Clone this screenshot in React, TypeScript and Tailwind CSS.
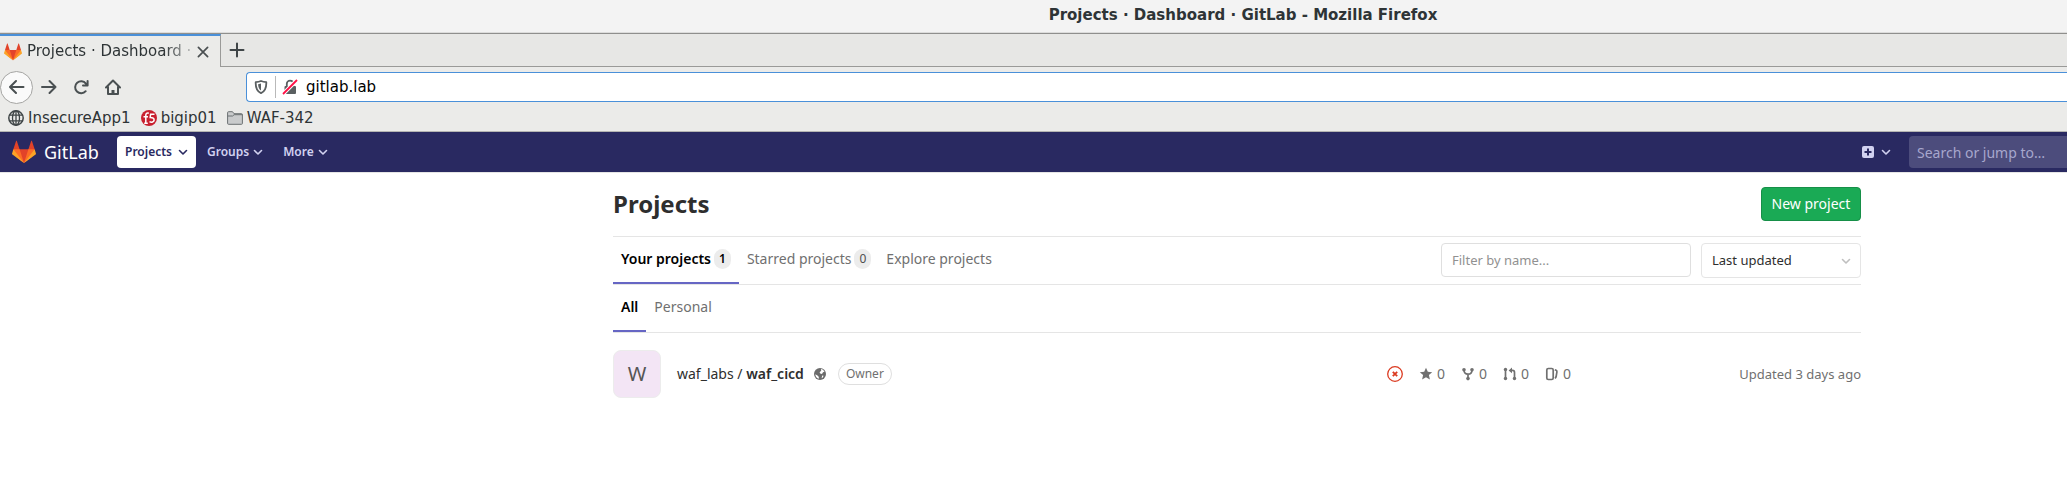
import type { ReactNode } from 'react';

function Tanuki({ className }: { className: string }) {
  return (
    <svg className={className} viewBox="0 0 36 36" aria-hidden="true">
      <path fill="#e24329" d="M2 14l9.38 9v-9l-4-12.28c-.205-.632-1.176-.632-1.38 0z" />
      <path fill="#e24329" d="M34 14l-9.38 9v-9l4-12.28c.205-.632 1.176-.632 1.38 0z" />
      <path fill="#e24329" d="M18 34.38L3 14h30z" />
      <path fill="#fc6d26" d="M18 34.38L11.38 14H2l4 11z" />
      <path fill="#fc6d26" d="M18 34.38L24.62 14H34l-4 11z" />
      <path fill="#fca326" d="M2 14L.1 20.16c-.18.565 0 1.2.5 1.56l17.42 12.66z" />
      <path fill="#fca326" d="M34 14l1.9 6.16c.18.565 0 1.2-.5 1.56L18 34.38z" />
    </svg>
  );
}

function Chevron({ className }: { className: string }) {
  return (
    <svg className={className} viewBox="0 0 10 10" fill="none" stroke="currentColor" strokeWidth="1.6" strokeLinecap="round" strokeLinejoin="round" aria-hidden="true">
      <path d="M1.5 3.5L5 7l3.5-3.5" />
    </svg>
  );
}

function Stroke({ children, className }: { children: ReactNode; className: string }) {
  return (
    <svg className={className} viewBox="0 0 16 16" fill="none" stroke="currentColor" strokeWidth="2" strokeLinecap="round" strokeLinejoin="round" aria-hidden="true">
      {children}
    </svg>
  );
}

function BrowserChrome() {
  return (
    <div className="bg-[#ebebe9] font-['DejaVu_Sans',sans-serif] text-[#2e3436]">
      <div className="flex h-[34px] items-center justify-center border-b border-[#8f8f8d] bg-[#f3f3f3] pb-0.5 pl-[419px] text-[15px] font-bold shadow-[inset_0_-1px_0_#dcdcdb]">
        Projects · Dashboard · GitLab - Mozilla Firefox
      </div>

      <div className="flex h-[33px]">
        <div className="flex w-[221px] items-center border-t-2 border-r border-t-[#4a90d9] border-r-[#9a9a98] pl-1">
          <Tanuki className="size-[18px] shrink-0" />
          <span className="ml-[5px] w-[167px] text-[15px] whitespace-nowrap [mask-image:linear-gradient(to_right,black_82%,transparent_104%)]">
            Projects · Dashboard ·
          </span>
          <button type="button" aria-label="Close tab" className="ml-[3px] text-[#4a4f51]">
            <svg className="size-3" viewBox="0 0 12 12" fill="none" stroke="currentColor" strokeWidth="1.7" strokeLinecap="round">
              <path d="M1.4 1.4l9.2 9.2M10.6 1.4l-9.2 9.2" />
            </svg>
          </button>
        </div>
        <div className="flex flex-1 items-center border-b border-[#9a9a98] bg-[#e7e7e5] pl-2">
          <button type="button" aria-label="New tab" className="text-[#3f4547]">
            <Stroke className="size-4"><path d="M8 1.5v13M1.5 8h13" /></Stroke>
          </button>
        </div>
      </div>

      <div className="flex h-10 items-center text-[#4a5052]">
        <button type="button" aria-label="Back" className="flex size-[33px] items-center justify-center rounded-full border border-[#a5a5a3] bg-[#fafafa]">
          <Stroke className="size-4"><path d="M14.5 8H1M7 2L1 8l6 6" /></Stroke>
        </button>
        <button type="button" aria-label="Forward" className="ml-2">
          <Stroke className="size-4"><path d="M1 8h13.5M8.5 2l6 6-6 6" /></Stroke>
        </button>
        <button type="button" aria-label="Reload" className="ml-4">
          <Stroke className="size-4"><path d="M12.7 12.2A6 6 0 1 1 12.9 4.6L14.3 6.4M14.6 2v4.6H10" /></Stroke>
        </button>
        <button type="button" aria-label="Home" className="ml-4">
          <Stroke className="size-4">
            <path d="M1 8.5l7-7 7 7M3 8v7h10V8" />
            <path d="M8 15v-4" strokeWidth="3" strokeLinecap="butt" />
          </Stroke>
        </button>
        <div className="ml-[125px] flex h-[30px] flex-1 items-center rounded-l border border-r-0 border-[#4a90d9] bg-white">
          <svg className="ml-[7px] size-3.5 text-[#5a5f61]" viewBox="0 0 14 14" aria-hidden="true">
            <path d="M7 1c2 .9 3.800 1.100 5.300 1.200C12.500 8 11 11.500 7 13.200 3 11.500 1.500 8 1.700 2.200 3.200 2.100 5 1.900 7 1z" fill="none" stroke="currentColor" strokeWidth="1.8" strokeLinejoin="round" />
            <path d="M7 3.600v7C5 9.300 4.200 7.200 4.100 4.200z" fill="currentColor" />
          </svg>
          <span className="ml-[7px] h-[22px] w-px bg-[#b9b9b9]" />
          <svg className="ml-1.5 size-4" viewBox="0 0 16 16" aria-hidden="true">
            <path d="M4.800 7V4.800a3.200 3.200 0 0 1 6.400 0V7" fill="none" stroke="#5a5f61" strokeWidth="1.800" />
            <rect x="2.500" y="7" width="11.500" height="8" rx="1" fill="#5a5f61" />
            <path d="M1 15L15 1" stroke="white" strokeWidth="4" />
            <path d="M1 15L15 1" stroke="#ff0f45" strokeWidth="1.800" />
          </svg>
          <input aria-label="Address" defaultValue="gitlab.lab" className="ml-2 min-w-0 flex-1 bg-transparent text-[15px] text-black outline-none" />
        </div>
      </div>

      <nav aria-label="Bookmarks" className="flex h-[25px] items-center border-b border-[#b4b4b2] pb-0.5 pl-2 text-[15px]">
        <a href="#insecureapp1" className="flex items-center gap-1">
          <svg className="size-4 text-[#3f4547]" viewBox="0 0 16 16" fill="none" stroke="currentColor" strokeWidth="1.3" aria-hidden="true">
            <circle cx="8" cy="8" r="7.200" strokeWidth="1.500" />
            <ellipse cx="8" cy="8" rx="3.500" ry="7.200" />
            <path d="M8 1v14M1.500 5.200h13M1.500 10.800h13" />
          </svg>
          InsecureApp1
        </a>
        <a href="#bigip01" className="ml-2.5 flex items-center gap-1">
          <svg className="size-4" viewBox="0 0 16 16" aria-hidden="true">
            <circle cx="8" cy="8" r="8" fill="#c8202f" />
            <path d="M7.800 3.200C5.500 2.500 4.800 4 4.800 5.500V13M2.500 6.800h4.500M3.200 13.200h3.600" stroke="white" strokeWidth="1.500" fill="none" />
            <path d="M13.500 4.200H9.600l-.4 3.300c2.600 0 4 .9 3.900 2.600-.1 1.900-2.600 2.700-4.600 1.600" stroke="white" strokeWidth="1.500" fill="none" />
          </svg>
          bigip01
        </a>
        <a href="#waf-342" className="ml-2.5 flex items-center gap-1">
          <svg className="size-4" viewBox="0 0 16 16" aria-hidden="true">
            <path d="M.6 13.400V2.600q0-.9.900-.9h4l1.500 2h7.500q.9 0 .9.900v8.800q0 .9-.9.900h-13q-.9 0-.9-.9z" fill="#c9cbcc" stroke="#6b7072" />
            <path d="M.6 6h5l1.500-1.300h8.300" fill="none" stroke="#6b7072" />
          </svg>
          WAF-342
        </a>
      </nav>
    </div>
  );
}

function Navbar() {
  return (
    <header className="flex h-10 items-center bg-[#292961] pl-3 text-xs font-semibold text-[#d1d1f0]">
      <a href="#home" className="flex items-center gap-2 text-lg font-normal text-white">
        <Tanuki className="size-6" />
        <span className="w-[57px]">GitLab</span>
      </a>
      <button type="button" className="ml-4 flex h-8 w-[79px] items-center justify-center gap-1.5 rounded bg-white text-[#292961]">
        Projects <Chevron className="size-2.5" />
      </button>
      <button type="button" className="ml-[11px] flex items-center gap-1">
        Groups <Chevron className="size-2.5" />
      </button>
      <button type="button" className="ml-5 flex items-center gap-1">
        More <Chevron className="size-2.5" />
      </button>
      <button type="button" aria-label="New" className="ml-auto flex items-center gap-[7px]">
        <svg className="size-3" viewBox="0 0 12 12" aria-hidden="true">
          <rect width="12" height="12" rx="2" fill="currentColor" />
          <path d="M6 2.500v7M2.500 6h7" stroke="#292961" strokeWidth="2" />
        </svg>
        <Chevron className="size-2.5" />
      </button>
      <input
        type="search"
        aria-label="Search"
        placeholder="Search or jump to…"
        className="ml-[18px] h-8 w-[158px] rounded-l bg-[#4c4c7c] pl-2 text-sm font-normal text-white outline-none placeholder:text-[#a7a7cd]"
      />
    </header>
  );
}

function Tab({ label, count, active }: { label: string; count?: number; active?: boolean }) {
  return (
    <a
      href={'#' + label.toLowerCase().replace(' ', '-')}
      className={
        active
          ? 'flex h-[47px] items-center gap-[3px] border-b-2 border-[#6666c4] px-2 pb-0.5 font-semibold text-black'
          : 'flex h-[47px] items-center gap-[3px] border-b-2 border-transparent pr-[7px] pl-2 pb-0.5 text-[#707070]'
      }
    >
      {label}
      {count !== undefined && (
        <span className={active ? 'rounded-full bg-[#ececec] px-[5px] text-xs leading-5' : 'rounded-full bg-[#ececec] px-[5px] text-xs leading-5 text-[#4f4f4f]'}>
          {count}
        </span>
      )}
    </a>
  );
}

function Stat({ label, children }: { label: string; children: ReactNode }) {
  return (
    <a href={'#' + label} aria-label={label} className="flex w-[42px] items-center gap-1">
      <svg className="size-3.5" viewBox="0 0 14 14" aria-hidden="true">{children}</svg>
      0
    </a>
  );
}

export default function App() {
  return (
    <div className="min-h-screen bg-white font-['Noto_Sans',sans-serif] text-[#2e2e2e]">
      <BrowserChrome />
      <Navbar />
      <main className="border-t border-[#e5e5e5] pr-[206px] pl-[613px] text-sm">
        <div className="flex h-16 items-center justify-between border-b border-[#e5e5e5] pb-0.5">
          <h1 className="text-2xl font-bold">Projects</h1>
          <button type="button" className="h-[34px] w-[100px] rounded border border-[#168f48] bg-[#1aaa55] text-white">New project</button>
        </div>

        <div className="flex h-12 items-start justify-between border-b border-[#e5e5e5]">
          <nav aria-label="Project lists" className="flex">
            <Tab label="Your projects" count={1} active />
            <Tab label="Starred projects" count={0} />
            <Tab label="Explore projects" />
          </nav>
          <div className="flex gap-2.5 pt-1.5 text-[13px]">
            <input
              type="search"
              aria-label="Filter by name"
              placeholder="Filter by name..."
              className="h-[34px] w-[250px] rounded border border-[#dfdfdf] px-2.5 outline-none placeholder:text-[#919191]"
            />
            <div className="grid items-center">
              <select aria-label="Sort by" className="col-start-1 row-start-1 h-[35px] w-40 appearance-none rounded border border-[#e5e5e5] bg-white px-2.5">
                <option>Last updated</option>
                <option>Name</option>
              </select>
              <span className="pointer-events-none col-start-1 row-start-1 mr-2.5 justify-self-end text-[#bfbfbf]">
                <Chevron className="size-2.5" />
              </span>
            </div>
          </div>
        </div>

        <nav aria-label="Project scope" className="flex h-12 border-b border-[#e5e5e5]">
          <Tab label="All" active />
          <Tab label="Personal" />
        </nav>

        <div className="flex items-center py-[17px]">
          <div className="flex size-12 items-center justify-center rounded-lg border border-[#ececec] bg-[#f3e5f5] text-xl text-[#555555]">W</div>
          <a href="#waf_cicd" className="ml-4">
            waf_labs / <strong className="font-semibold">waf_cicd</strong>
          </a>
          <svg className="ml-2.5 size-3" viewBox="0 0 12 12" role="img" aria-label="Public">
            <circle cx="6" cy="6" r="6" fill="#6b6b6b" />
            <path d="M7 1.100c1.600.3 2.800 1.300 3.500 2.700L9 4.200 8 6 6.200 5.600 5.600 4.200 7.200 2.800zM1.300 6.200l2.200 1.200 1.200 1.400.2 2C2.900 10.300 1.500 8.600 1.300 6.200zM8.200 7.600l1.400.2-.8 1.600-1.200.8z" fill="white" />
          </svg>
          <span className="ml-3 rounded-full border border-[#dfdfdf] px-[7px] text-xs leading-5 text-[#707070]">Owner</span>
          <div className="ml-auto flex items-center text-[#707070]">
            <svg className="mr-4 size-4" viewBox="0 0 16 16" fill="none" stroke="#db3b21" role="img" aria-label="Pipeline failed">
              <circle cx="8" cy="8" r="7.300" strokeWidth="1.300" />
              <path d="M5.800 5.800l4.400 4.400M10.200 5.800l-4.400 4.400" strokeWidth="1.800" />
            </svg>
            <Stat label="stars">
              <path fill="currentColor" d="M7 .8l1.800 4 4.400.4-3.300 2.900 1 4.400L7 10.200l-3.900 2.300 1-4.400L.8 5.200l4.400-.4z" />
            </Stat>
            <Stat label="forks">
              <g fill="currentColor">
                <circle cx="3" cy="2.800" r="1.800" />
                <circle cx="11" cy="2.800" r="1.800" />
                <circle cx="7" cy="11.600" r="1.800" />
              </g>
              <path d="M3 3c0 3 1.500 4.200 4 4.200S11 6 11 3M7 7v4.500" fill="none" stroke="currentColor" strokeWidth="1.700" />
            </Stat>
            <Stat label="merge-requests">
              <g fill="currentColor">
                <circle cx="2.500" cy="2.500" r="1.700" />
                <circle cx="2.500" cy="11.500" r="1.700" />
                <circle cx="11.500" cy="11.500" r="1.700" />
                <path d="M5.600 3.400L9 .6v5.600z" />
              </g>
              <path d="M2.500 2.500v9M8.500 3.400h1c1.300 0 2 .7 2 2v6" fill="none" stroke="currentColor" strokeWidth="1.700" />
            </Stat>
            <Stat label="issues">
              <rect x="1.800" y="1.500" width="6.400" height="11" rx="1.500" fill="none" stroke="currentColor" strokeWidth="1.700" />
              <path d="M9.800 2.800l1.300.5q1 .5.800 1.500l-.8 5q-.2.900-1.300 1.300" fill="none" stroke="currentColor" strokeWidth="1.700" />
            </Stat>
            <span className="w-[274px] text-right text-[13px]">Updated 3 days ago</span>
          </div>
        </div>
      </main>
    </div>
  );
}
